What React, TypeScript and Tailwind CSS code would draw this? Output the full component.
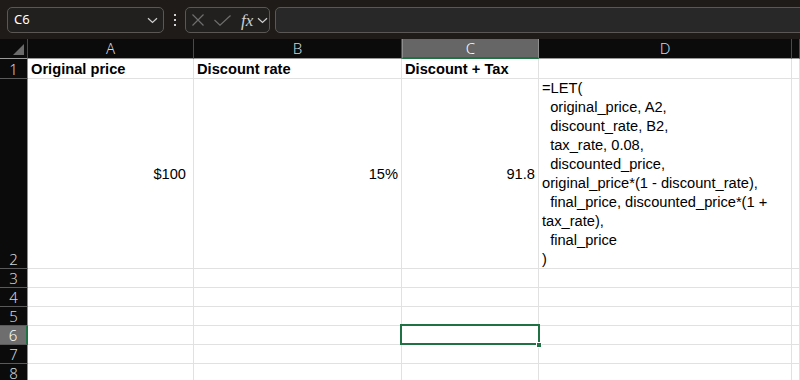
import React from "react";

const Chevron = ({ className }: { className?: string }) => (
  <svg width="11" height="7" viewBox="0 0 11 7" className={className}>
    <path d="M1 1.2 L5.5 5.5 L10 1.2" fill="none" stroke="#cfcfcf" strokeWidth="1.2" />
  </svg>
);

const sans = "font-['Liberation_Sans',Arial,sans-serif]";
const ui = "font-['Noto_Sans','Open_Sans',sans-serif]";

const formula = [
  "=LET(",
  "  original_price, A2,",
  "  discount_rate, B2,",
  "  tax_rate, 0.08,",
  "  discounted_price,",
  "original_price*(1 - discount_rate),",
  "  final_price, discounted_price*(1 +",
  "tax_rate),",
  "  final_price",
  ")",
];

function ColHead({ label, selected }: { label: string; selected?: boolean }) {
  return (
    <div
      className={`${ui} flex items-center justify-center text-[15px] font-light ${
        selected
          ? "bg-[#666666] text-white border-r border-l border-[#8e8e8e] border-b-2 border-b-[#1f7244]"
          : "bg-[#0b0b0b] text-[#cdd5de] border-r border-r-[#4a4a4a] border-b border-b-[#9a9a9a]"
      }`}
    >
      {label}
    </div>
  );
}

function RowHead({ n, selected }: { n: number; selected?: boolean }) {
  return (
    <div
      className={`${ui} flex items-end justify-center text-[15px] font-light leading-[18px] border-b border-b-[#5a5a5a] ${
        selected
          ? "bg-[#6e6e6e] text-white border-r-2 border-r-[#1f7244]"
          : "bg-[#0b0b0b] text-[#cdd5de] border-r border-r-[#8c8c8c]"
      }`}
    >
      {n}
    </div>
  );
}

function Cell({ children, className = "" }: { children?: React.ReactNode; className?: string }) {
  return (
    <div
      className={`${sans} bg-white text-black text-[14.67px] border-r border-b border-[#e1e1e1] overflow-hidden ${className}`}
    >
      {children}
    </div>
  );
}

export default function App() {
  const emptyRows = [3, 4, 5, 6, 7, 8];
  return (
    <div className="w-[800px] h-[380px] overflow-hidden bg-white">
      {/* toolbar */}
      <div className="h-[39px] bg-[#1e1b18] flex items-start pt-[7px] pl-[7px] overflow-hidden">
        <div className={`${ui} shrink-0 w-[157px] h-[26px] rounded-[5px] border border-[#5a5754] bg-[#22201e] flex items-center justify-between pl-[6px] pr-[5px] text-white text-[13px]`}>
          <span>C6</span>
          <Chevron />
        </div>
        <div className="shrink-0 ml-[9px] w-[3px] h-[26px] flex flex-col items-center justify-center gap-[3px]">
          <span className="w-[2px] h-[2px] bg-[#cfcfcf]" />
          <span className="w-[2px] h-[2px] bg-[#cfcfcf]" />
          <span className="w-[2px] h-[2px] bg-[#cfcfcf]" />
        </div>
        <div className="shrink-0 ml-[9px] w-[85px] h-[26px] rounded-[5px] border border-[#5a5754] bg-[#22201e] flex items-center pl-[6px]">
          <svg width="12" height="12" viewBox="0 0 12 12">
            <path d="M0.5 0.5 L11.5 11.5 M11.5 0.5 L0.5 11.5" stroke="#6e6e6e" strokeWidth="1.2" />
          </svg>
          <svg width="17" height="11" viewBox="0 0 17 11" className="ml-[10px]">
            <path d="M0.5 5 L6 10.2 L16.5 0.5" fill="none" stroke="#6e6e6e" strokeWidth="1.2" />
          </svg>
          <span className="ml-[10px] font-['Liberation_Serif',serif] italic text-[17px] text-[#d0d0d0] leading-none">fx</span>
          <Chevron className="ml-[4px]" />
        </div>
        <div className="ml-[5px] w-[540px] shrink-0 h-[26px] rounded-[5px] border border-[#5a5754] bg-[#282828]" />
      </div>

      {/* grid */}
      <div className="grid grid-cols-[28px_166px_208px_137px_253px_1fr] grid-rows-[20px_20px_190px_19px_19px_19px_19px_19px_19px]">
        {/* header row */}
        <div className="bg-[#0b0b0b] border-r border-r-[#4a4a4a] border-b border-b-[#9a9a9a] flex items-end justify-end pr-[3px] pb-[3px]">
          <svg width="11" height="11" viewBox="0 0 11 11">
            <path d="M11 0 L11 11 L0 11 Z" fill="#6b6b6b" />
          </svg>
        </div>
        <ColHead label="A" />
        <ColHead label="B" />
        <ColHead label="C" selected />
        <ColHead label="D" />
        <ColHead label="" />

        {/* row 1 */}
        <RowHead n={1} />
        <Cell className="font-bold pl-[3px] flex items-center">Original price</Cell>
        <Cell className="font-bold pl-[3px] flex items-center">Discount rate</Cell>
        <Cell className="font-bold pl-[3px] flex items-center">Discount + Tax</Cell>
        <Cell />
        <Cell />

        {/* row 2 */}
        <RowHead n={2} />
        <Cell className="flex items-center justify-end pr-[7px]">$100</Cell>
        <Cell className="flex items-center justify-end pr-[3px]">15%</Cell>
        <Cell className="flex items-center justify-end pr-[3px]">91.8</Cell>
        <Cell className="pl-[3px] leading-[19px]">
          {formula.map((l, i) => (
            <div key={i} className="whitespace-pre">
              {l}
            </div>
          ))}
        </Cell>
        <Cell />

        {emptyRows.map((r) => (
          <React.Fragment key={r}>
            <RowHead n={r} selected={r === 6} />
            <Cell />
            <Cell />
            {r === 6 ? (
              <div className="relative bg-white border-r border-b border-[#e1e1e1]">
                <div className="absolute -top-[2px] -left-[2px] -right-[2px] -bottom-[1px] border-2 border-[#1f7244]" />
                <div className="absolute -right-[4px] -bottom-[4px] w-[6px] h-[6px] bg-[#1f7244] border border-white" />
              </div>
            ) : (
              <Cell />
            )}
            <Cell />
            <Cell />
          </React.Fragment>
        ))}
      </div>
    </div>
  );
}
